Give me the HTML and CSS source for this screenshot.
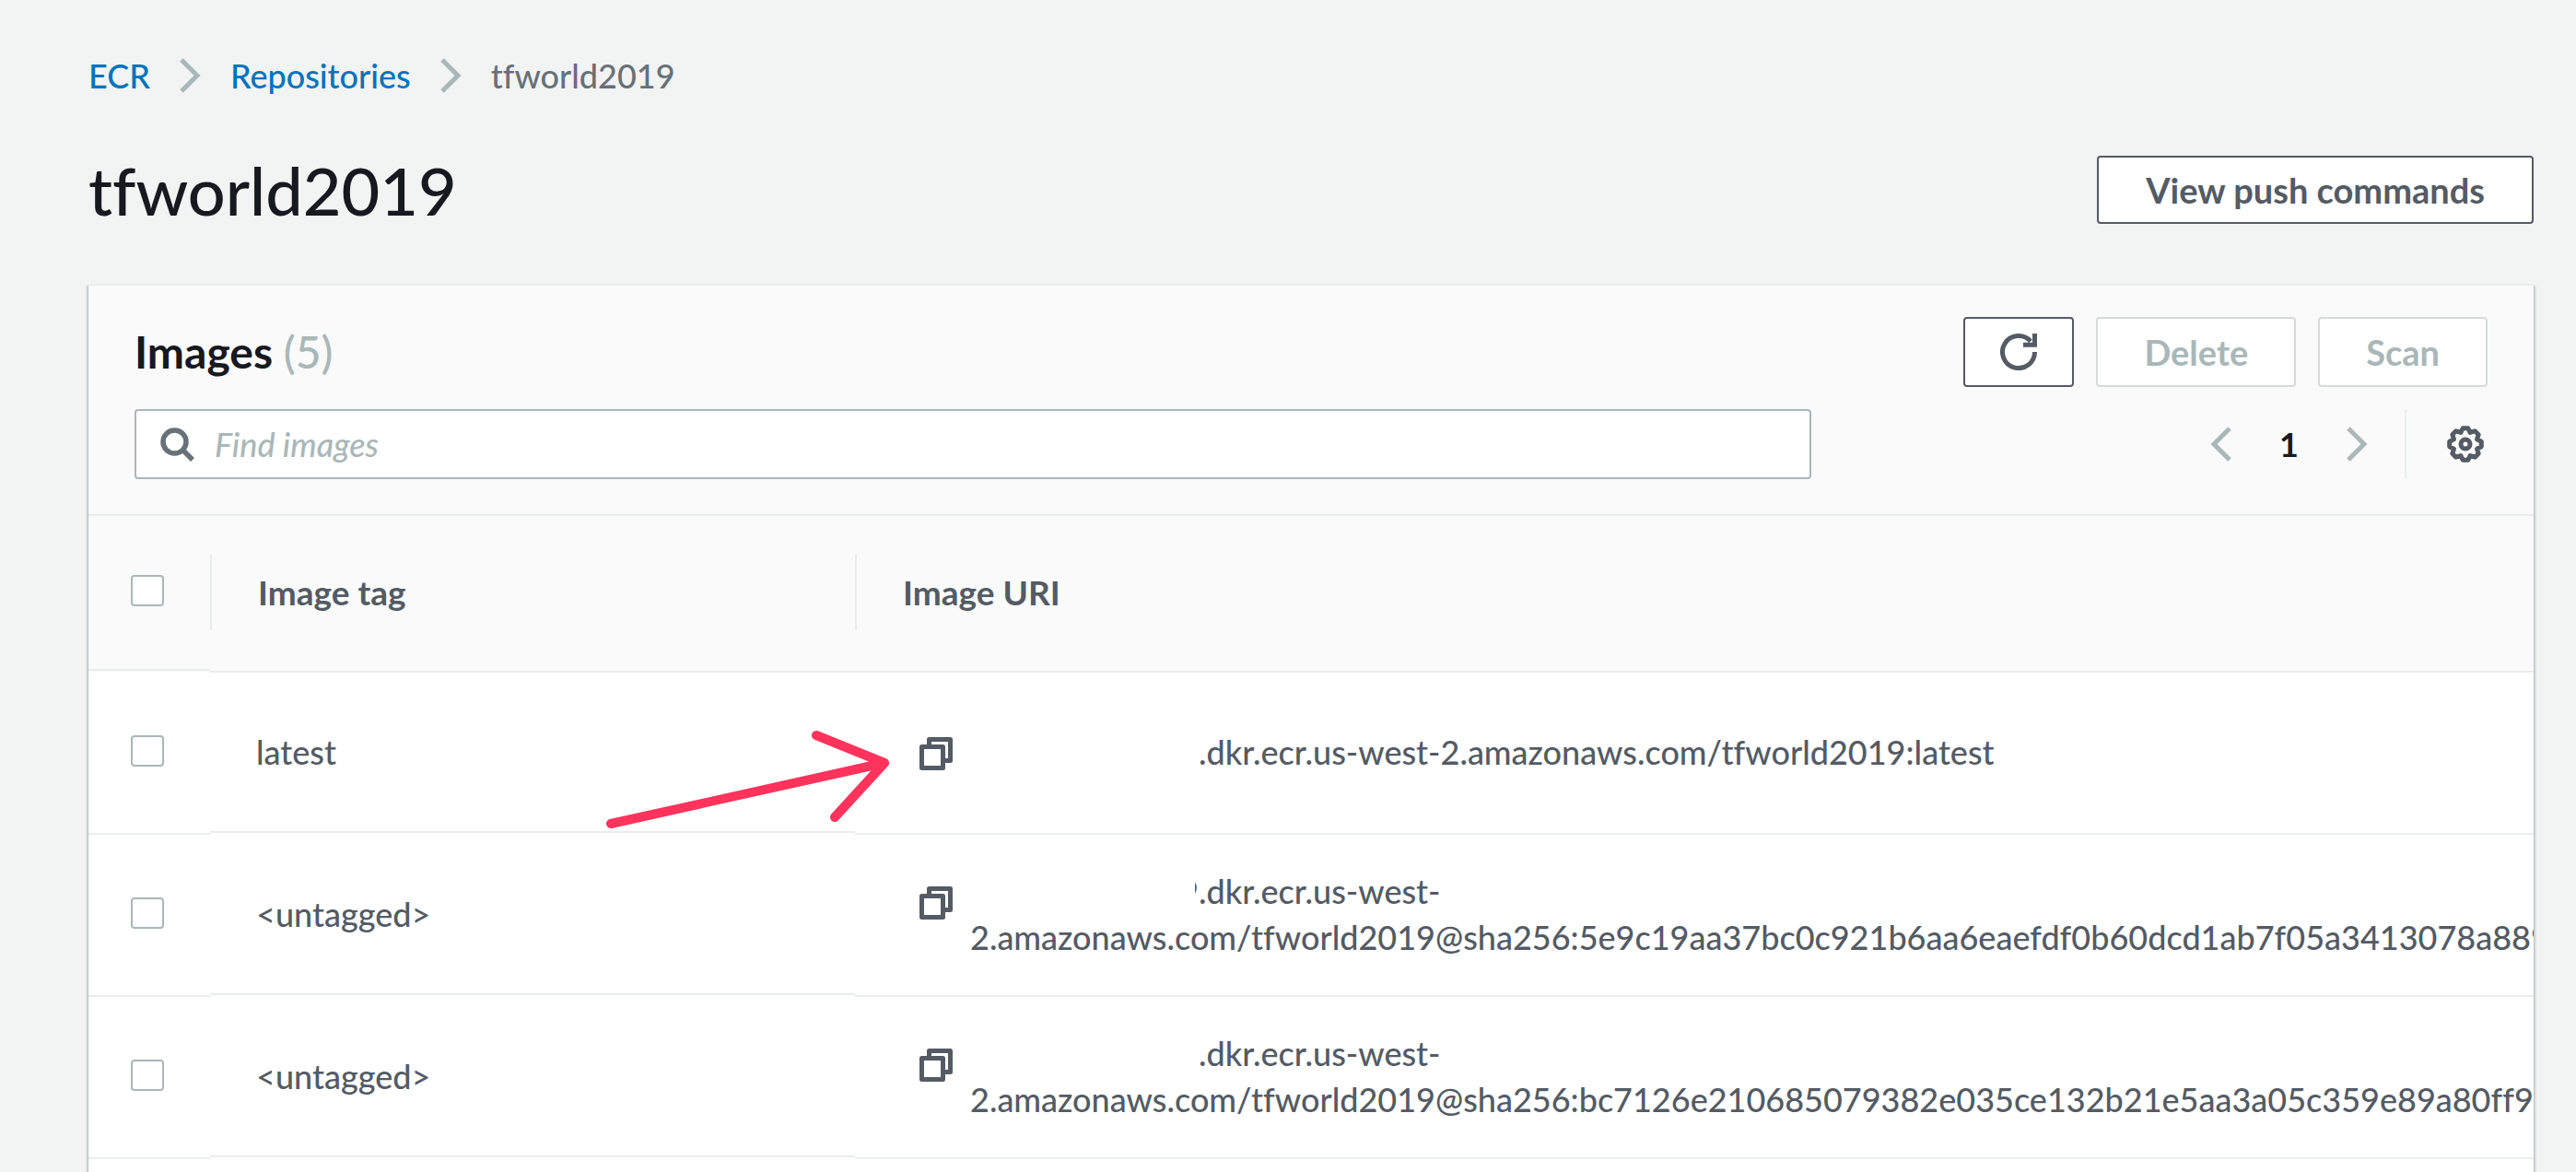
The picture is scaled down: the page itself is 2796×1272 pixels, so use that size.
FILE: index.html
```html
<!DOCTYPE html>
<html lang="en">
<head>
<meta charset="utf-8">
<title>ECR - tfworld2019</title>
<link rel="stylesheet" href="styles.css">
</head>
<body>
<svg class="defs" aria-hidden="true">
  <symbol id="chevron" viewBox="0 0 23 38"><path d="M2 2 19 19 2 36" fill="none" stroke="currentColor" stroke-width="5"/></symbol>
  <symbol id="chevron-left" viewBox="0 0 23 38"><path d="M21 2 4 19 21 36" fill="none" stroke="currentColor" stroke-width="5"/></symbol>
  <symbol id="copy" viewBox="0 0 36 36">
    <g fill="#fff" stroke="currentColor" stroke-width="5" stroke-linejoin="round"><path d="M10.5 2.5h23v23h-23z"/><path d="M2.5 10.5h23v23h-23z"/></g>
  </symbol>
</svg>

<nav class="breadcrumbs" aria-label="Breadcrumbs">
  <a href="#ecr">ECR</a>
  <svg class="chevron"><use href="#chevron"/></svg>
  <a href="#repositories">Repositories</a>
  <svg class="chevron"><use href="#chevron"/></svg>
  <span>tfworld2019</span>
</nav>

<header class="page-header">
  <h1>tfworld2019</h1>
  <button class="button" type="button">View push commands</button>
</header>

<main class="panel">
  <div class="panel-header">
    <div class="bar">
      <h2>Images <span class="count">(5)</span></h2>
      <div class="actions">
        <button class="button button-icon" type="button" aria-label="Refresh">
          <svg class="icon" viewBox="0 0 40 40"><path d="M37.5 20A17.5 17.5 0 1 1 33 8.300M37.500 0V12.300H25" fill="none" stroke="currentColor" stroke-width="5"/></svg>
        </button>
        <button class="button" type="button" disabled>Delete</button>
        <button class="button" type="button" disabled>Scan</button>
      </div>
    </div>
    <div class="bar">
      <div class="search">
        <svg class="search-icon" viewBox="0 0 37 37"><g fill="none" stroke="currentColor" stroke-width="5.500"><circle cx="15.500" cy="15.500" r="12.500"/><path d="M24 24 35 35"/></g></svg>
        <input type="text" placeholder="Find images" aria-label="Find images">
      </div>
      <div class="pagination">
        <button class="plain" type="button" aria-label="Previous page" disabled><svg class="chevron"><use href="#chevron-left"/></svg></button>
        <span class="page-number">1</span>
        <button class="plain" type="button" aria-label="Next page" disabled><svg class="chevron"><use href="#chevron"/></svg></button>
        <span class="divider"></span>
        <button class="plain settings" type="button" aria-label="Preferences">
          <svg class="icon" viewBox="-20 -20 40 40"><g fill="none" stroke="currentColor" stroke-width="5" stroke-linejoin="round"><path d="M17.300-2.700 17.300 2.700 12.500 5.200 14.200 10.300 10.300 14.200 5.200 12.500 2.700 17.300-2.700 17.300-5.200 12.500-10.300 14.200-14.200 10.300-12.500 5.200-17.300 2.700-17.300-2.700-12.500-5.200-14.200-10.300-10.300-14.200-5.200-12.500-2.700-17.300 2.700-17.300 5.200-12.500 10.300-14.200 14.200-10.300 12.500-5.200Z"/><circle r="5"/></g></svg>
        </button>
      </div>
    </div>
  </div>

  <div class="table-wrap">
    <table>
      <thead>
        <tr>
          <th class="select"><input type="checkbox" aria-label="Select all images"></th>
          <th class="tag" scope="col"><div class="heading">Image tag</div></th>
          <th scope="col"><div class="heading">Image URI</div></th>
        </tr>
      </thead>
      <tbody>
        <tr>
          <td class="select"><input type="checkbox" aria-label="Select latest"></td>
          <td class="tag">latest</td>
          <td class="uri">
            <div class="uri-line">
              <button class="plain copy" type="button" aria-label="Copy URI"><svg><use href="#copy"/></svg></button>
              <div><span class="account"></span>.dkr.ecr.us-west-2.amazonaws.com/tfworld2019:latest</div>
            </div>
          </td>
        </tr>
        <tr>
          <td class="select"><input type="checkbox" aria-label="Select first untagged image"></td>
          <td class="tag">&lt;untagged&gt;</td>
          <td class="uri">
            <div class="uri-line two-lines">
              <button class="plain copy" type="button" aria-label="Copy URI"><svg><use href="#copy"/></svg></button>
              <div><span class="account"><span class="sliver">9</span></span>.dkr.ecr.us-west-<br>2.amazonaws.com/tfworld2019@sha256:5e9c19aa37bc0c921b6aa6eaefdf0b60dcd1ab7f05a3413078a889</div>
            </div>
          </td>
        </tr>
        <tr>
          <td class="select"><input type="checkbox" aria-label="Select second untagged image"></td>
          <td class="tag">&lt;untagged&gt;</td>
          <td class="uri">
            <div class="uri-line two-lines">
              <button class="plain copy" type="button" aria-label="Copy URI"><svg><use href="#copy"/></svg></button>
              <div><span class="account"></span>.dkr.ecr.us-west-<br>2.amazonaws.com/tfworld2019@sha256:bc7126e210685079382e035ce132b21e5aa3a05c359e89a80ff95</div>
            </div>
          </td>
        </tr>
      </tbody>
    </table>
    <svg class="arrow" viewBox="0 0 312 112" aria-hidden="true"><path d="M7 104 304 38M230 8 304 38 250 97" fill="none" stroke="#ff335b" stroke-width="10" stroke-linecap="round" stroke-linejoin="round"/></svg>
  </div>
</main>
</body>
</html>
```
FILE: styles.css
```css
* {
  box-sizing: border-box;
}

body {
  margin: 0;
  padding: 57px 46px 0 96px;
  height: 100vh;
  overflow: hidden;
  display: flex;
  flex-direction: column;
  background: #f2f3f3;
  color: #545b64;
  font: 500 36px/50px Lato, sans-serif;
  font-variant-ligatures: none;
}

button,
input {
  font: inherit;
  color: inherit;
}

h1,
h2 {
  margin: 0;
  color: #16191f;
}

.defs {
  display: none;
}

.chevron {
  display: block;
  width: 23px;
  height: 38px;
  color: #aab7b8;
}

.icon {
  display: block;
  width: 40px;
  height: 40px;
}

.breadcrumbs {
  display: flex;
  align-items: center;
  gap: 32px;
  color: #687078;
}

.breadcrumbs a {
  color: #0073bb;
  text-decoration: none;
}

.page-header {
  display: flex;
  align-items: center;
  justify-content: space-between;
  margin: 55px 0 58px;
}

h1 {
  font-size: 72px;
  line-height: 88px;
  font-weight: 500;
}

.button {
  display: flex;
  align-items: center;
  justify-content: center;
  height: 74px;
  padding: 0 51px;
  background: #fff;
  border: 2px solid #545b64;
  border-radius: 4px;
  font-size: 38px;
  font-weight: 700;
}

.actions .button {
  height: 76px;
  padding: 0 50px;
}

.button:disabled {
  color: #aab7b8;
  border-color: #d5dbdb;
}

.actions .button-icon {
  padding: 0 38px;
}

.plain {
  display: block;
  padding: 0;
  border: 0;
  background: none;
}

.panel {
  flex: 1 0 auto;
  background: #fff;
  border-top: 2px solid #eaeded;
  box-shadow: 0 2px 2px 0 rgba(0, 28, 36, 0.3), 2px 2px 2px 0 rgba(0, 28, 36, 0.15), -2px 2px 2px 0 rgba(0, 28, 36, 0.15);
}

.panel-header {
  display: flex;
  flex-direction: column;
  gap: 24px;
  padding: 34px 50px 38px;
  background: #fafafa;
  border-bottom: 2px solid #eaeded;
}

.bar {
  display: flex;
  align-items: center;
  justify-content: space-between;
}

h2 {
  font-size: 48px;
  font-weight: 700;
}

.count {
  color: #aab7b8;
  font-weight: 500;
}

.actions {
  display: flex;
  gap: 24px;
}

.search {
  display: flex;
  align-items: center;
  gap: 22px;
  width: 71.25%;
  height: 76px;
  padding: 0 26px;
  background: #fff;
  border: 2px solid #aab7b8;
  border-radius: 4px;
}

.search-icon {
  flex: none;
  width: 37px;
  height: 37px;
  color: #687078;
}

.search input {
  flex: 1;
  min-width: 0;
  padding: 0;
  border: 0;
  outline: 0;
  background: none;
}

.search input::placeholder {
  color: #aab7b8;
  font-style: italic;
  opacity: 1;
}

.pagination {
  display: flex;
  align-items: center;
  padding-right: 4px;
}

.page-number {
  margin: 0 52px;
  color: #16191f;
  font-weight: 700;
}

.divider {
  width: 2px;
  height: 76px;
  margin: 0 44px 0 40px;
  background: #eaeded;
}

.table-wrap {
  position: relative;
}

table {
  width: 100%;
  table-layout: fixed;
  border-collapse: collapse;
}

th {
  padding: 42px 0 46px;
  background: linear-gradient(#eaeded, #eaeded) 0 100% / 100% 2px no-repeat #fafafa;
  text-align: left;
}

th.select {
  width: 132px;
  padding: 0 0 8px 46px;
  background-position: 0 calc(100% - 2px);
}

th.tag {
  width: 700px;
}

.heading {
  padding-left: 50px;
  border-left: 2px solid #eaeded;
  font-size: 37px;
  line-height: 82px;
  font-weight: 700;
}

td {
  height: 176px;
  padding: 0 0 4px;
  background: linear-gradient(#eaeded, #eaeded) 0 100% / 100% 2px no-repeat #fff;
}

td.select {
  padding-left: 46px;
  padding-bottom: 6px;
}

td.tag {
  padding-left: 50px;
  background-position: 0 calc(100% - 2px);
}

td.uri {
  padding-left: 70px;
  overflow: hidden;
  white-space: nowrap;
}

input[type="checkbox"] {
  appearance: none;
  display: block;
  width: 36px;
  height: 34px;
  margin: 0;
  background: #fff;
  border: 2px solid #aab7b8;
  border-radius: 4px;
}

.uri-line {
  display: flex;
  align-items: flex-start;
  gap: 19px;
}

.copy {
  flex: none;
  margin-top: 9px;
}

.two-lines .copy {
  margin-top: 20px;
}

.copy svg {
  display: block;
  width: 36px;
  height: 36px;
}

/* Blank space that hides the account number */
.account {
  display: inline-flex;
  justify-content: flex-end;
  width: 248px;
  height: 50px;
  vertical-align: top;
}

.sliver {
  display: flex;
  justify-content: flex-end;
  width: 4px;
  overflow: hidden;
}

.arrow {
  position: absolute;
  left: 560px;
  top: 230px;
  width: 312px;
  height: 112px;
}
```
